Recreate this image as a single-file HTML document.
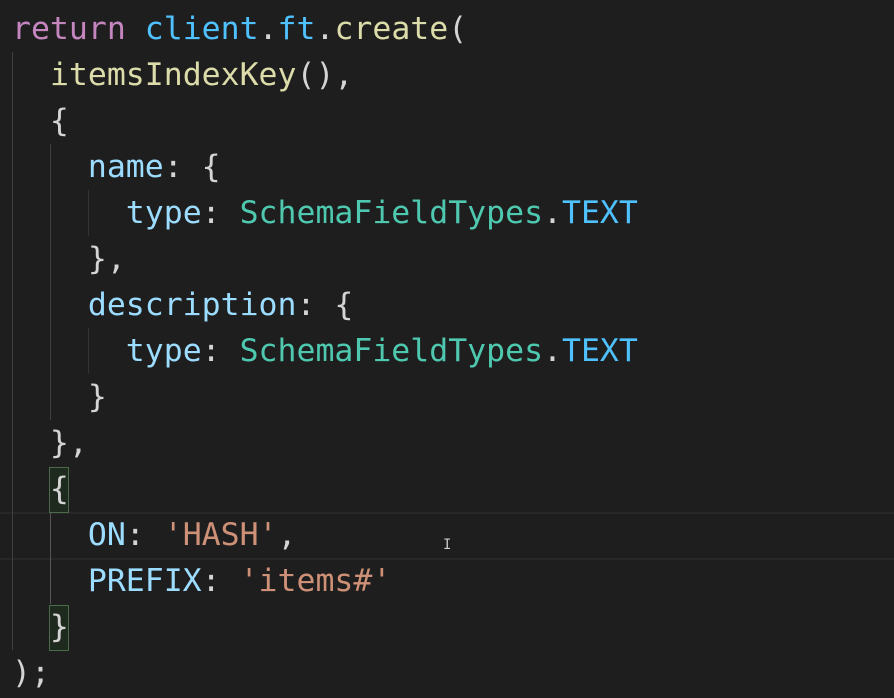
<!DOCTYPE html>
<html><head><meta charset="utf-8"><style>
html,body{margin:0;padding:0;background:#1e1e1e;width:894px;height:698px;overflow:hidden}
.ed{position:relative;width:894px;height:698px;font-family:"DejaVu Sans Mono","Liberation Mono",monospace;font-size:31.5px;color:#d4d4d4}
.l{position:absolute;left:12px;height:46px;line-height:46px;white-space:pre}
.k{color:#c586c0}.v{color:#4fc1ff}.f{color:#dcdcaa}.p{color:#9cdcfe}.c{color:#4ec9b0}.s{color:#ce9178}
.g{position:absolute;width:1px;background:#404040}
.cur{position:absolute;left:0;width:894px;top:512px;height:44px;border-top:2px solid #282828;border-bottom:2px solid #282828}
.bb{position:absolute;left:49px;width:18px;height:44px;border:1px solid #4b6b4b;background:#1f2a1f}
</style></head><body><div class="ed">
<div class="cur"></div>
<div class="g" style="left:12px;top:52px;height:598px"></div>
<div class="g" style="left:50px;top:144px;height:276px"></div>
<div class="g" style="left:50px;top:512px;height:92px;background:#555"></div>
<div class="g" style="left:88px;top:190px;height:46px;background:#333"></div>
<div class="g" style="left:88px;top:328px;height:46px;background:#333"></div>
<div class="bb" style="top:467px"></div>
<div class="bb" style="top:605px"></div>
<div class="l" style="top:6px"><span class="k">return</span> <span class="v">client</span>.<span class="v">ft</span>.<span class="f">create</span>(</div>
<div class="l" style="top:52px">  <span class="f">itemsIndexKey</span>(),</div>
<div class="l" style="top:98px">  {</div>
<div class="l" style="top:144px">    <span class="p">name</span>: {</div>
<div class="l" style="top:190px">      <span class="p">type</span>: <span class="c">SchemaFieldTypes</span>.<span class="v">TEXT</span></div>
<div class="l" style="top:236px">    },</div>
<div class="l" style="top:282px">    <span class="p">description</span>: {</div>
<div class="l" style="top:328px">      <span class="p">type</span>: <span class="c">SchemaFieldTypes</span>.<span class="v">TEXT</span></div>
<div class="l" style="top:374px">    }</div>
<div class="l" style="top:420px">  },</div>
<div class="l" style="top:466px">  {</div>
<div class="l" style="top:512px">    <span class="p">ON</span>: <span class="s">'HASH'</span>,</div>
<div class="l" style="top:558px">    <span class="p">PREFIX</span>: <span class="s">'items#'</span></div>
<div class="l" style="top:604px">  }</div>
<div class="l" style="top:650px">);</div>
<div style="position:absolute;left:443px;top:537px;color:#ccc;font:14px 'DejaVu Sans Mono',monospace">I</div>
</div></body></html>
